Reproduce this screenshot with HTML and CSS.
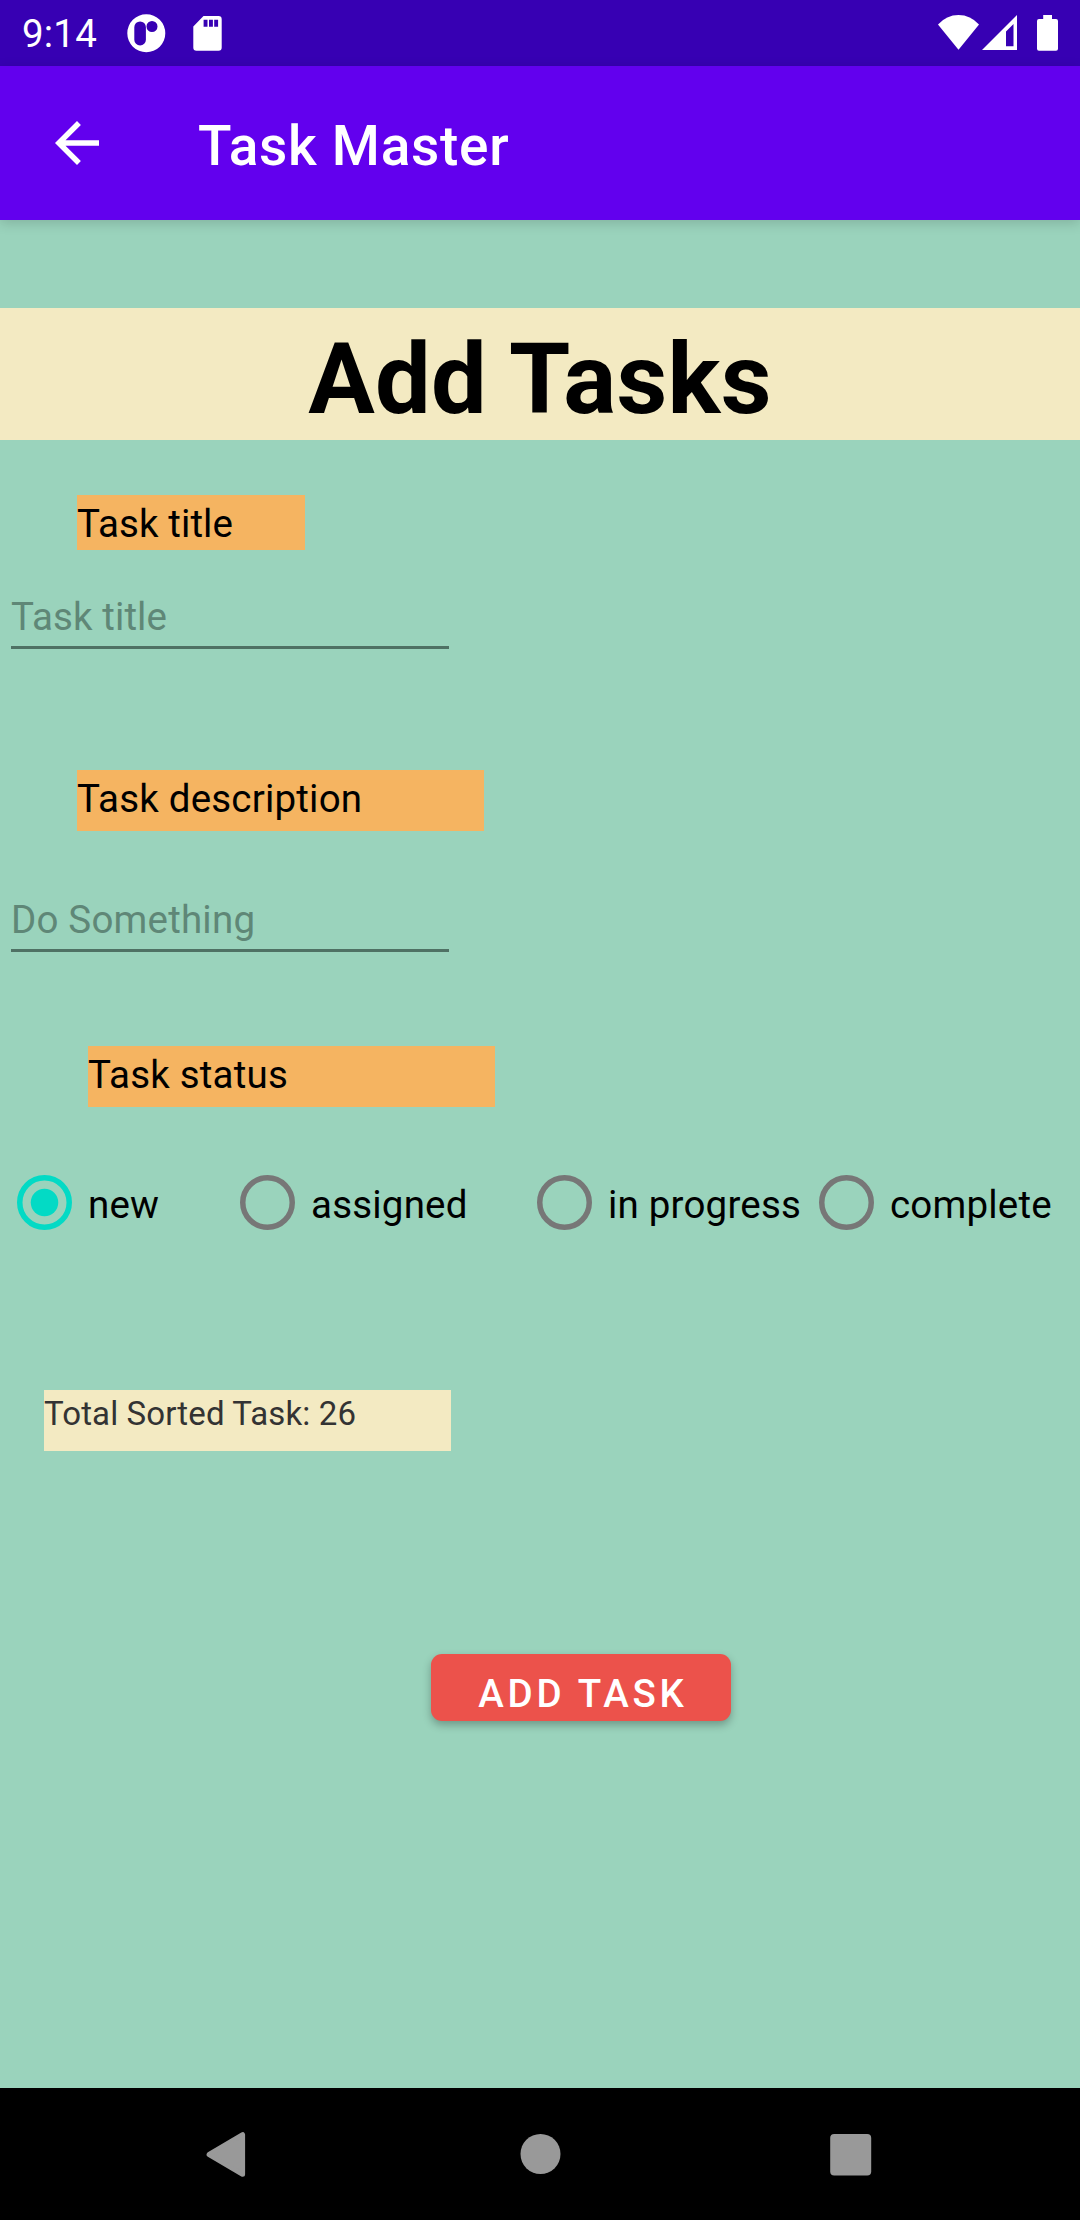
FILE: index.html
```html
<!DOCTYPE html>
<html lang="en">
<head>
<meta charset="utf-8">
<title>Task Master</title>
<link rel="stylesheet" href="styles.css">
</head>
<body>
<div class="screen">
  <header class="status-bar">
    <span class="clock">9:14</span>
    <svg class="notifications" width="78" height="66" viewBox="126 0 78 66">
      <path fill="#fff" fill-rule="evenodd" d="M127.300 33.300a19 19 0 1 0 38 0a19 19 0 1 0-38 0zM134.300 27.200v12.500a5.800 5.800 0 0 0 11.600 0V27.200a5.800 5.800 0 0 0-11.600 0zM146.500 26.500a5.500 5.500 0 1 0 11 0a5.500 5.500 0 1 0-11 0z"/>
    </svg>
    <svg class="sd-card" width="30" height="66" viewBox="193 0 30 66">
      <path fill="#fff" fill-rule="evenodd" d="M203.500 16H218.500a3.200 3.200 0 0 1 3.200 3.200V47.500a3.200 3.200 0 0 1-3.200 3.200H196.500a3.200 3.200 0 0 1-3.200-3.200V26.500zM203.600 19.800v7h3.900v-7zM209 19.800v7h3.900v-7zM214.200 19.800v7h3.900v-7z"/>
    </svg>
    <svg class="system-icons" width="122" height="66" viewBox="938 0 122 66">
      <path fill="#fff" d="M938 24.500Q946.500 15 958.500 15T979 24.500L958.500 49.700z"/>
      <path fill="#fff" fill-rule="evenodd" d="M1017 15V50H982zM1013.500 24L1006 31.500V46.300H1013.500z"/>
      <path fill="#fff" d="M1043.200 15h8.800v4h4a2 2 0 0 1 2 2v27.800a2 2 0 0 1-2 2h-17a2 2 0 0 1-2-2V21a2 2 0 0 1 2-2h4.200z"/>
    </svg>
  </header>
  <div class="app-bar">
    <svg class="back" width="66" height="66" viewBox="0 0 24 24"><path fill="#fff" d="M20 11H7.830l5.590-5.590L12 4l-8 8 8 8 1.410-1.410L7.830 13H20v-2z"/></svg>
    <span class="app-title">Task Master</span>
  </div>
  <main class="content">
    <h1 class="heading">Add Tasks</h1>
    <div class="label label-title">Task title</div>
    <div class="field field-title">Task title</div>
    <div class="label label-description">Task description</div>
    <div class="field field-description">Do Something</div>
    <div class="label label-status">Task status</div>
    <div class="radios">
      <div class="option">
        <svg class="radio checked" viewBox="0 0 20 20"><circle class="ring" cx="10" cy="10" r="9"/><circle class="dot" cx="10" cy="10" r="5"/></svg>
        <span class="option-text">new</span>
      </div>
      <div class="option">
        <svg class="radio" viewBox="0 0 20 20"><circle class="ring" cx="10" cy="10" r="9"/></svg>
        <span class="option-text">assigned</span>
      </div>
      <div class="option">
        <svg class="radio" viewBox="0 0 20 20"><circle class="ring" cx="10" cy="10" r="9"/></svg>
        <span class="option-text">in progress</span>
      </div>
      <div class="option">
        <svg class="radio" viewBox="0 0 20 20"><circle class="ring" cx="10" cy="10" r="9"/></svg>
        <span class="option-text">complete</span>
      </div>
    </div>
    <div class="total">Total Sorted Task: 26</div>
    <div class="add-button">ADD TASK</div>
  </main>
  <nav class="nav-bar">
    <svg width="44" height="52" viewBox="204 2128 44 52"><path fill="#999" stroke="#999" stroke-width="5" stroke-linejoin="round" d="M209.100 2154.500L242.600 2134.700V2174.300z"/></svg>
    <svg width="44" height="52" viewBox="516.5 2128 44 52"><circle cx="540" cy="2154" r="20" fill="#999"/></svg>
    <svg width="44" height="52" viewBox="829 2128 44 52"><rect x="830.200" y="2134" width="41" height="41.400" rx="4" fill="#999"/></svg>
  </nav>
</div>
</body>
</html>
```
FILE: styles.css
```css
* { box-sizing: border-box; }
body { margin: 0; font-family: Roboto, sans-serif; }
.screen {
  width: 1080px;
  height: 2220px;
  display: flex;
  flex-direction: column;
  background: #9ad3bc;
  font-size: 38.5px;
  line-height: 46px;
  letter-spacing: 0.2px;
  color: #000;
  overflow: hidden;
}
.status-bar {
  height: 66px;
  display: flex;
  background: #3700b3;
  color: #fff;
  padding-left: 22px;
}
.clock { width: 104px; padding-top: 11px; letter-spacing: 0.2px; }
.notifications { width: 78px; margin-right: -11px; }
.system-icons { margin-left: auto; margin-right: 20px; }
.app-bar {
  height: 154px;
  display: flex;
  padding: 44px 0 0 44px;
  background: #6200ee;
  color: #fff;
  box-shadow: 0 3px 12px rgba(0, 0, 0, 0.16);
}
.app-title {
  margin-left: 88px;
  padding-top: 4px;
  font-size: 55px;
  line-height: 64px;
  font-weight: 500;
  letter-spacing: 0.72px;
}
.content { flex: 1; display: flex; flex-direction: column; align-items: flex-start; }
.heading {
  width: 1080px;
  height: 132px;
  margin: 88px 0 0;
  padding-top: 13px;
  background: #f3eac2;
  font-size: 99px;
  line-height: 116px;
  font-weight: 700;
  text-align: center;
  letter-spacing: 0.2px;
}
.label { width: 407px; height: 61px; padding-top: 6px; margin-left: 77px; background: #f5b461; white-space: nowrap; }
.label-title { width: 228px; height: 55px; margin-top: 55px; }
.field { width: 438px; height: 55px; margin-left: 11px; border-bottom: 3px solid #4f7164; color: #5f8777; }
.field-title { margin-top: 44px; }
.label-title, .field-title { letter-spacing: 0.1px; }
.label-description { margin-top: 121px; }
.field-description { margin-top: 66px; }
.label-status { margin-left: 88px; margin-top: 94px; }
.radios { display: grid; grid-template-columns: 223px 297px 282px 278px; width: 1080px; height: 56px; margin-top: 68px; }
.option { display: flex; padding-left: 16.500px; }
.radio { flex: none; width: 55px; height: 55px; }
.ring { fill: none; stroke: #777; stroke-width: 2; }
.checked .ring { stroke: #03dac5; }
.dot { fill: #03dac5; }
.option-text { padding: 7px 0 0 16.500px; white-space: nowrap; }
.total {
  width: 407px;
  height: 61px;
  margin: 159px 0 0 44px;
  padding-top: 4px;
  background: #f3eac2;
  color: #333;
  font-size: 33px;
  line-height: 39px;
  letter-spacing: 0.12px;
}
.add-button {
  width: 300px;
  height: 67px;
  margin: 203px 0 0 431px;
  padding: 17px 0 0 4px;
  border-radius: 11px;
  background: #ec524b;
  color: #fff;
  text-align: center;
  font-weight: 500;
  letter-spacing: 3.750px;
  box-shadow: 0 4px 8px rgba(0, 0, 0, 0.28);
}
.nav-bar { height: 132px; padding: 40px 207px 0 204px; display: flex; justify-content: space-between; background: #000; }
```
